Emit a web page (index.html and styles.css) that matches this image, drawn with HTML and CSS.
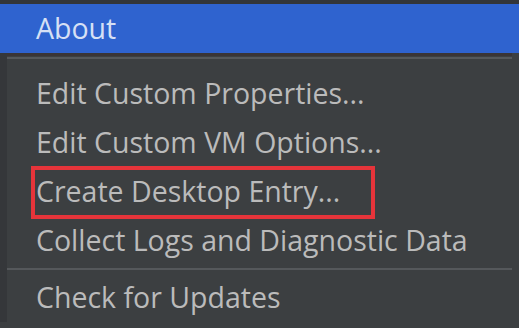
FILE: index.html
```html
<!DOCTYPE html>
<html>
<head>
<meta charset="utf-8">
<link rel="stylesheet" href="styles.css">
</head>
<body>
<div class="screen">
  <div class="topstrip"></div>
  <div class="item selected">About</div>
  <div class="lower">
    <div class="sep first"></div>
    <div class="item">Edit Custom Properties...</div>
    <div class="item">Edit Custom VM Options...</div>
    <div class="item">Create Desktop Entry...</div>
    <div class="item">Collect Logs and Diagnostic Data</div>
    <div class="sep second"></div>
    <div class="item">Check for Updates</div>
  </div>
  <div class="highlight"></div>
</div>
</body>
</html>
```
FILE: styles.css
```css
html, body {
  margin: 0;
  padding: 0;
  background: #3c3f41;
}
.screen {
  position: relative;
  width: 519px;
  height: 328px;
  overflow: hidden;
  background: #3c3f41;
  font-family: "Open Sans", "Noto Sans", sans-serif;
  font-size: 28.5px;
  color: #bbbbbb;
}
.topstrip {
  height: 4px;
  background: #33363a;
}
.item {
  height: 49px;
  line-height: 49px;
  padding-left: 36px;
  white-space: nowrap;
}
.selected {
  background: #2f63cf;
  color: #d6e0f5;
}
.lower {
  border-left: 7px solid #35373a;
  padding-right: 7px;
}
.lower .item {
  padding-left: 29px;
}
.sep {
  position: relative;
}
.sep.first {
  height: 16px;
  border-top: 3px solid #3a3536;
  box-sizing: border-box;
}
.sep.first::after,
.sep.second::after {
  content: "";
  position: absolute;
  left: 0;
  right: 0;
  height: 2px;
  background: #55585b;
}
.sep.first::after { top: 1px; }
.sep.second {
  height: 8px;
}
.sep.second::after { top: 3px; }
.highlight {
  position: absolute;
  left: 31px;
  top: 166px;
  width: 336px;
  height: 45px;
  border: 4px solid #e6343a;
}
```
